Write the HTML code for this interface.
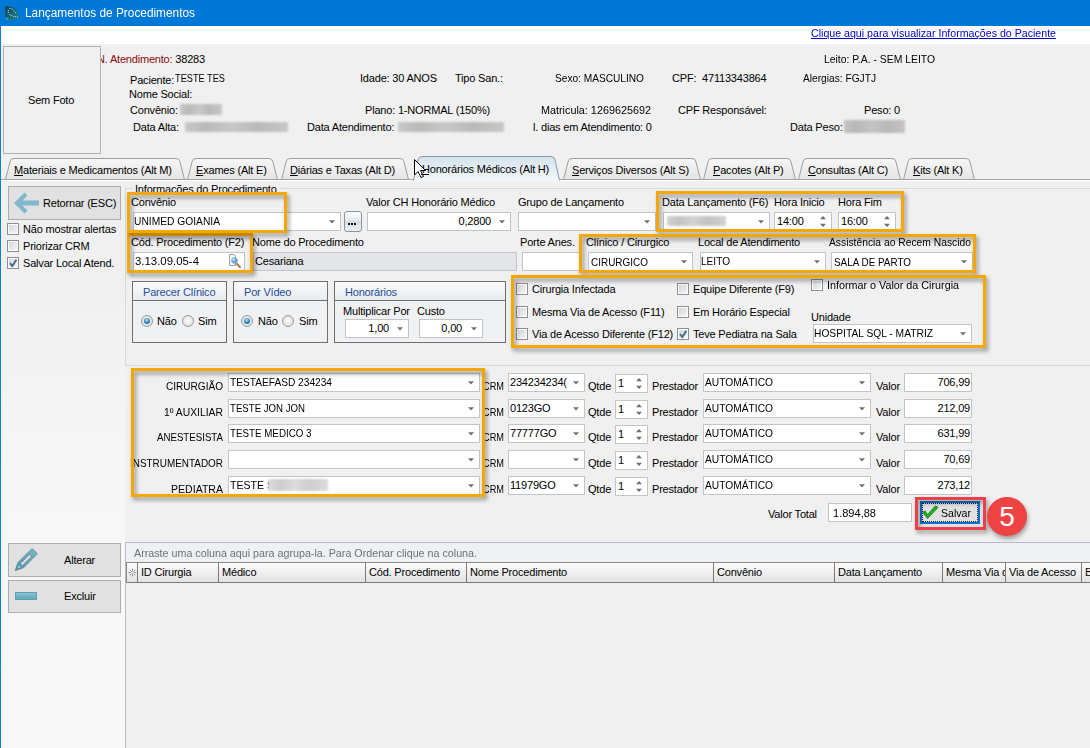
<!DOCTYPE html><html><head><meta charset="utf-8"><style>
*{box-sizing:border-box;margin:0;padding:0}
html,body{width:1090px;height:748px;overflow:hidden;background:#f0f0f0}
body{position:relative;font-family:"Liberation Sans",sans-serif;font-size:11px;letter-spacing:-0.19px;color:#000}
.a{position:absolute}
.t{position:absolute;white-space:nowrap;line-height:13px;height:13px}
.blur{position:absolute;filter:blur(1.3px);border-radius:1px}
.inp{position:absolute;background:#fff;border:1px solid #bfc5cb}
.cb{position:absolute;border:1px solid #8f8f8f;background:linear-gradient(135deg,#cdd3d9,#f7f8f9);box-shadow:inset 0 0 0 1px #fcfcfc}
.dd{position:absolute;width:0;height:0;border-left:3px solid transparent;border-right:3px solid transparent;border-top:3px solid #707070}
.ob{position:absolute;border:3px solid #f7a800;filter:drop-shadow(2px 3px 2px rgba(0,0,0,0.42))}
.grp{position:absolute;border:1px solid #6f6f6f;background:#f0f1f3}
.grph{position:absolute;left:0;right:0;top:0;height:19px;border-bottom:1px solid #6f6f6f;background:linear-gradient(#fafbfc,#e8ebf0)}
.rad{position:absolute;width:12px;height:12px;border-radius:50%;border:1px solid #9a9a9a;background:radial-gradient(circle,#fafafa,#dadada)}
.btn{position:absolute;background:#e1e1e1;border:1px solid #adadad}
.gh{position:absolute;top:562px;height:21px;border:1px solid #7a7a7a;border-left:none;border-top-color:#8a8a8a;background:linear-gradient(#fcfcfc,#e2e2e4)}
</style></head><body>
<div class="a" style="left:0;top:0;width:1090px;height:26px;background:#0078d7"></div>
<div class="a" style="left:0;top:26px;width:1px;height:722px;background:#1a7bd2"></div>
<div class="a" style="left:1px;top:26px;width:1089px;height:18px;background:#fff"></div>
<svg class="a" style="left:0;top:0" width="25" height="25" viewBox="0 0 25 25"><defs><linearGradient id="ig" x1="0" y1="0" x2="1" y2="1"><stop offset="0" stop-color="#0b3f4d"/><stop offset="0.6" stop-color="#17707f"/><stop offset="1" stop-color="#1a8294"/></linearGradient></defs><path d="M5.2 7.5 Q5.5 6 7.5 6.2 L13 7.3 Q16.5 8.8 18.3 13 L19 16.5 Q18.6 19.6 15 19.6 L8 20.2 Q5.4 19.8 5.2 17 Z" fill="url(#ig)"/><path d="M8.3 13 L8.3 10 Q9 8 11 8.3 Q14 9.5 16 14 M9.5 14.5 L13.5 16.5 L18.5 17" stroke="#dff0f3" stroke-width="0.9" fill="none" stroke-dasharray="1 1"/><path d="M6 18 L8.5 20" stroke="#cfe6f5" stroke-width="1" stroke-dasharray="1 0.8"/></svg>
<div class="t" style="left:25px;top:7px;letter-spacing:0;transform:scaleX(0.9482);transform-origin:0 0;color:#fff;font-size:12.5px">Lançamentos de Procedimentos</div>
<div class="t" style="left:811px;top:27px;letter-spacing:0;transform:scaleX(0.9655);transform-origin:0 0;color:#0000d0;text-decoration:underline">Clique aqui para visualizar Informações do Paciente</div>
<div class="t" style="left:97px;top:53px;color:#8b0d0d">N. Atendimento: <span style="color:#000">38283</span></div>
<div class="a" style="left:3px;top:46px;width:98px;height:108px;border:1px solid #aeb2b7;background:#f0f0f0"></div>
<div class="t" style="left:28px;top:94px;">Sem Foto</div>
<div class="t" style="left:824px;top:53px;letter-spacing:0;transform:scaleX(0.9439);transform-origin:0 0;">Leito: P.A. - SEM LEITO</div>
<div class="t" style="left:130px;top:74px;">Paciente:</div>
<div class="t" style="left:175px;top:72px;letter-spacing:0;transform:scaleX(0.8375);transform-origin:0 0;">TESTE TES</div>
<div class="t" style="left:360px;top:72px;">Idade: 30 ANOS</div>
<div class="t" style="left:455px;top:72px;">Tipo San.:</div>
<div class="t" style="left:555px;top:72px;letter-spacing:0;transform:scaleX(0.9214);transform-origin:0 0;">Sexo: MASCULINO</div>
<div class="t" style="left:672px;top:72px;">CPF:&nbsp; 47113343864</div>
<div class="t" style="left:803px;top:72px;letter-spacing:0;transform:scaleX(0.9257);transform-origin:0 0;">Alergias: FGJTJ</div>
<div class="t" style="left:129px;top:88px;">Nome Social:</div>
<div class="t" style="left:130px;top:104px;">Convênio:</div>
<div class="blur" style="left:180px;top:104px;width:42px;height:11px;background:linear-gradient(90deg,#c8c8c8,#b9b9b9 20%,#c8c8c8 45%,#b9b9b9 70%,#c8c8c8)"></div>
<div class="t" style="left:365px;top:104px;">Plano: 1-NORMAL (150%)</div>
<div class="t" style="left:541px;top:104px;letter-spacing:0;transform:scaleX(0.9828);transform-origin:0 0;">Matricula: 1269625692</div>
<div class="t" style="left:678px;top:104px;">CPF Responsável:</div>
<div class="t" style="left:864px;top:104px;">Peso: 0</div>
<div class="t" style="left:133px;top:121px;">Data Alta:</div>
<div class="blur" style="left:185px;top:122px;width:103px;height:10px;background:linear-gradient(90deg,#c8c8c8,#b9b9b9 20%,#c8c8c8 45%,#b9b9b9 70%,#c8c8c8)"></div>
<div class="t" style="left:307px;top:121px;">Data Atendimento:</div>
<div class="blur" style="left:398px;top:122px;width:106px;height:10px;background:linear-gradient(90deg,#c8c8c8,#b9b9b9 20%,#c8c8c8 45%,#b9b9b9 70%,#c8c8c8)"></div>
<div class="t" style="left:533px;top:121px;">l. dias em Atendimento: 0</div>
<div class="t" style="left:790px;top:121px;">Data Peso:</div>
<div class="blur" style="left:844px;top:120px;width:61px;height:13px;background:linear-gradient(90deg,#c4c4c4,#b8b8b8 20%,#c4c4c4 45%,#b8b8b8 70%,#c4c4c4)"></div>
<svg class="a" style="left:0;top:0" width="1090" height="200" viewBox="0 0 1090 200">
<defs><linearGradient id="tg" x1="0" y1="0" x2="0" y2="1"><stop offset="0" stop-color="#f7f7f7"/><stop offset="1" stop-color="#e4e4e4"/></linearGradient><linearGradient id="ta" x1="0" y1="0" x2="0" y2="1"><stop offset="0" stop-color="#d5e3ec"/><stop offset="1" stop-color="#f4f8fa"/></linearGradient></defs>
<path d="M5.5 179.5 L10.0 162 Q10.5 158.5 14 158.5 L176 158.5 Q179.5 158.5 180 162 L184.5 179.5 Z" fill="url(#tg)" stroke="none"/>
<path d="M5.5 179.5 L10.0 162 Q10.5 158.5 14 158.5 L176 158.5 Q179.5 158.5 180 162 L184.5 179.5" fill="none" stroke="#9d9d9d" stroke-width="1"/>
<path d="M187.5 179.5 L192.0 162 Q192.5 158.5 196 158.5 L269 158.5 Q272.5 158.5 273 162 L277.5 179.5 Z" fill="url(#tg)" stroke="none"/>
<path d="M187.5 179.5 L192.0 162 Q192.5 158.5 196 158.5 L269 158.5 Q272.5 158.5 273 162 L277.5 179.5" fill="none" stroke="#9d9d9d" stroke-width="1"/>
<path d="M281.5 179.5 L286.0 162 Q286.5 158.5 290 158.5 L400 158.5 Q403.5 158.5 404 162 L408.5 179.5 Z" fill="url(#tg)" stroke="none"/>
<path d="M281.5 179.5 L286.0 162 Q286.5 158.5 290 158.5 L400 158.5 Q403.5 158.5 404 162 L408.5 179.5" fill="none" stroke="#9d9d9d" stroke-width="1"/>
<path d="M563.5 179.5 L568.0 162 Q568.5 158.5 572 158.5 L692 158.5 Q695.5 158.5 696 162 L700.5 179.5 Z" fill="url(#tg)" stroke="none"/>
<path d="M563.5 179.5 L568.0 162 Q568.5 158.5 572 158.5 L692 158.5 Q695.5 158.5 696 162 L700.5 179.5" fill="none" stroke="#9d9d9d" stroke-width="1"/>
<path d="M703.5 179.5 L708.0 162 Q708.5 158.5 712 158.5 L787 158.5 Q790.5 158.5 791 162 L795.5 179.5 Z" fill="url(#tg)" stroke="none"/>
<path d="M703.5 179.5 L708.0 162 Q708.5 158.5 712 158.5 L787 158.5 Q790.5 158.5 791 162 L795.5 179.5" fill="none" stroke="#9d9d9d" stroke-width="1"/>
<path d="M798.5 179.5 L803.0 162 Q803.5 158.5 807 158.5 L892 158.5 Q895.5 158.5 896 162 L900.5 179.5 Z" fill="url(#tg)" stroke="none"/>
<path d="M798.5 179.5 L803.0 162 Q803.5 158.5 807 158.5 L892 158.5 Q895.5 158.5 896 162 L900.5 179.5" fill="none" stroke="#9d9d9d" stroke-width="1"/>
<path d="M903.5 179.5 L908.0 162 Q908.5 158.5 912 158.5 L966 158.5 Q969.5 158.5 970 162 L974.5 179.5 Z" fill="url(#tg)" stroke="none"/>
<path d="M903.5 179.5 L908.0 162 Q908.5 158.5 912 158.5 L966 158.5 Q969.5 158.5 970 162 L974.5 179.5" fill="none" stroke="#9d9d9d" stroke-width="1"/>
<rect x="1" y="179" width="1089" height="1" fill="#a3a3a3"/>
<rect x="1" y="180" width="1089" height="1" fill="#ffffff"/>
<path d="M413.5 181.5 L418.0 160 Q418.5 156.5 422 156.5 L551 156.5 Q554.5 156.5 555 160 L559.5 181.5 Z" fill="url(#ta)"/>
<path d="M413.5 180.5 L418.0 160 Q418.5 156.5 422 156.5 L551 156.5 Q554.5 156.5 555 160 L559.5 180.5" fill="none" stroke="#8e9aa2" stroke-width="1"/>
</svg>
<div class="t" style="left:14px;top:164px"><u>M</u>ateriais e Medicamentos (Alt M)</div>
<div class="t" style="left:196px;top:164px"><u>E</u>xames (Alt E)</div>
<div class="t" style="left:290px;top:164px"><u>D</u>iárias e Taxas (Alt D)</div>
<div class="t" style="left:572px;top:164px"><u>S</u>erviços Diversos (Alt S)</div>
<div class="t" style="left:713px;top:164px"><u>P</u>acotes (Alt P)</div>
<div class="t" style="left:808px;top:164px"><u>C</u>onsultas (Alt C)</div>
<div class="t" style="left:913px;top:164px"><u>K</u>its (Alt K)</div>
<div class="t" style="left:422px;top:163px">Honorários Médicos (Alt H)</div>
<svg class="a" style="left:413px;top:158px" width="14" height="21" viewBox="0 0 14 21"><path d="M1.5 1.5 L1.5 17 L5 13.5 L8 19.5 L10.5 18.5 L7.5 12.5 L12.5 12.5 Z" fill="#fff" stroke="#000" stroke-width="1" stroke-linejoin="miter"/></svg>
<div class="a" style="left:421px;top:174px;width:8px;height:1px;background:#000"></div>
<div class="a" style="left:1px;top:181px;width:124px;height:567px;background:linear-gradient(#f0f0f0 0%,#f0f0f0 15%,#f7f7f7 55%,#f8f8f8 100%)"></div>
<div class="btn" style="left:8px;top:186px;width:113px;height:34px"></div>
<svg class="a" style="left:13px;top:191px" width="28" height="24" viewBox="0 0 28 24"><path d="M1 12 L11.5 1.5 L14.5 4.5 L9.5 9.5 L26 9.5 L26 14.5 L9.5 14.5 L14.5 19.5 L11.5 22.5 Z" fill="#7fb8cb"/></svg>
<div class="t" style="left:43px;top:197px;">Retornar (ESC)</div>
<div class="cb" style="left:7px;top:223px;width:12px;height:12px"></div>
<div class="t" style="left:23px;top:223px;">Não mostrar alertas</div>
<div class="cb" style="left:7px;top:240px;width:12px;height:12px"></div>
<div class="t" style="left:23px;top:240px;">Priorizar CRM</div>
<div class="cb" style="left:7px;top:257px;width:12px;height:12px"></div>
<svg class="a" style="left:7px;top:257px" width="12" height="12"><path d="M3 6 L5.3 9 L9.3 2.8" fill="none" stroke="#4a6790" stroke-width="1.9"/></svg>
<div class="t" style="left:23px;top:257px;">Salvar Local Atend.</div>
<div class="btn" style="left:8px;top:543px;width:113px;height:34px"></div>
<svg class="a" style="left:10px;top:545px" width="30" height="30" viewBox="0 0 30 30"><defs><linearGradient id="pg" x1="0" y1="1" x2="1" y2="0"><stop offset="0" stop-color="#4f98b2"/><stop offset="1" stop-color="#78b6ca"/></linearGradient></defs><path d="M21.5 4 Q22.2 3.5 23 4.2 L26.8 8 Q27.4 8.8 26.8 9.5 L13.5 22.8 L5 25.8 L7.8 17.5 Z M19.6 9.6 L21.4 11.4 L12.4 20.4 L10.6 18.6 Z" fill="url(#pg)" fill-rule="evenodd" stroke="#55656b" stroke-width="0.5"/><circle cx="9" cy="21.8" r="0.9" fill="#dfe8ea"/></svg>
<div class="t" style="left:64px;top:554px;">Alterar</div>
<div class="btn" style="left:8px;top:580px;width:113px;height:33px"></div>
<div class="a" style="left:15px;top:592px;width:22px;height:8px;background:linear-gradient(#8cc3d3,#62a7bd);border:1px solid #5d9fb4"></div>
<div class="t" style="left:64px;top:590px;">Excluir</div>
<div class="a" style="left:125px;top:188px;width:966px;height:178px;border:1px solid #d8d8d8;border-right:none"></div>
<div class="a" style="left:133px;top:183px;width:147px;height:13px;background:#f0f0f0"></div>
<div class="t" style="left:135px;top:183px;">Informações do Procedimento</div>
<div class="t" style="left:131px;top:196px;">Convênio</div>
<div class="inp" style="left:133px;top:212px;width:208px;height:19px;background:#fff"></div>
<svg class="a" style="left:329px;top:220px" width="6" height="4"><path d="M0 0.2 L6 0.2 L3 3.4 Z" fill="#707070"/></svg>
<div class="t" style="left:134px;top:215px;letter-spacing:0;transform:scaleX(0.9318);transform-origin:0 0;">UNIMED GOIANIA</div>
<div class="a" style="left:344px;top:211px;width:18px;height:21px;border:1px solid #8a949e;border-radius:3px;background:linear-gradient(#fdfdfe 0%,#e9edf1 46%,#d6dde4 50%,#eef1f4 100%)"></div>
<div class="a" style="left:348px;top:223px;width:2px;height:2px;background:#111"></div><div class="a" style="left:351px;top:223px;width:2px;height:2px;background:#111"></div><div class="a" style="left:354px;top:223px;width:2px;height:2px;background:#111"></div>
<div class="t" style="left:366px;top:196px;">Valor CH Honorário Médico</div>
<div class="inp" style="left:367px;top:212px;width:144px;height:19px;background:#fff"></div>
<svg class="a" style="left:499px;top:220px" width="6" height="4"><path d="M0 0.2 L6 0.2 L3 3.4 Z" fill="#707070"/></svg>
<div class="t" style="left:191px;width:300px;text-align:right;top:215px;">0,2800</div>
<div class="t" style="left:518px;top:196px;">Grupo de Lançamento</div>
<div class="inp" style="left:518px;top:212px;width:138px;height:19px;background:#fff"></div>
<svg class="a" style="left:644px;top:220px" width="6" height="4"><path d="M0 0.2 L6 0.2 L3 3.4 Z" fill="#707070"/></svg>
<div class="t" style="left:662px;top:196px;">Data Lançamento (F6)</div>
<div class="inp" style="left:663px;top:212px;width:107px;height:19px;background:#fff"></div>
<svg class="a" style="left:758px;top:220px" width="6" height="4"><path d="M0 0.2 L6 0.2 L3 3.4 Z" fill="#707070"/></svg>
<div class="blur" style="left:667px;top:216px;width:59px;height:10px;background:linear-gradient(90deg,#d2d2d2,#c2c2c2 20%,#d2d2d2 45%,#c2c2c2 70%,#d2d2d2)"></div>
<div class="t" style="left:774px;top:196px;">Hora Inicio</div>
<div class="inp" style="left:774px;top:212px;width:58px;height:18px"></div>
<svg class="a" style="left:820px;top:215px" width="7" height="13"><path d="M0 4.2 L6 4.2 L3 1 Z M0 8.8 L6 8.8 L3 12 Z" fill="#6e6e6e"/></svg>
<div class="t" style="left:777px;top:215px;">14:00</div>
<div class="t" style="left:838px;top:196px;">Hora Fim</div>
<div class="inp" style="left:838px;top:212px;width:58px;height:18px"></div>
<svg class="a" style="left:884px;top:215px" width="7" height="13"><path d="M0 4.2 L6 4.2 L3 1 Z M0 8.8 L6 8.8 L3 12 Z" fill="#6e6e6e"/></svg>
<div class="t" style="left:841px;top:215px;">16:00</div>
<div class="t" style="left:131px;top:236px;">Cód. Procedimento (F2)</div>
<div class="inp" style="left:133px;top:252px;width:112px;height:19px;background:#fff"></div>
<div class="t" style="left:135px;top:255px;letter-spacing:0;transform:scaleX(1.0359);transform-origin:0 0;">3.13.09.05-4</div>
<svg class="a" style="left:228px;top:254px" width="14" height="15" viewBox="0 0 14 15"><path d="M1.5 0.5 L6 0.5 L7.5 2 L7.5 11.5 L1.5 11.5Z" fill="#f4f8fb" stroke="#8d959c" stroke-width="0.9"/><path d="M7.5 8.5 L12 13" stroke="#a88452" stroke-width="2.2" stroke-linecap="round"/><circle cx="6.5" cy="6.5" r="3" fill="#5aa6dc" stroke="#9fb3c2" stroke-width="0.8"/><circle cx="5.6" cy="5.6" r="1.2" fill="#d9eefa"/></svg>
<div class="t" style="left:252px;top:236px;">Nome do Procedimento</div>
<div class="inp" style="left:253px;top:252px;width:264px;height:19px;background:#e4e5e9"></div>
<div class="t" style="left:255px;top:255px;">Cesariana</div>
<div class="t" style="left:520px;top:236px;">Porte Anes.</div>
<div class="inp" style="left:522px;top:252px;width:59px;height:19px;background:#fff"></div>
<div class="t" style="left:586px;top:236px;">Clínico / Cirurgico</div>
<div class="inp" style="left:588px;top:252px;width:105px;height:19px;background:#fff"></div>
<svg class="a" style="left:681px;top:260px" width="6" height="4"><path d="M0 0.2 L6 0.2 L3 3.4 Z" fill="#707070"/></svg>
<div class="t" style="left:591px;top:256px;letter-spacing:0;transform:scaleX(0.9054);transform-origin:0 0;">CIRURGICO</div>
<div class="t" style="left:698px;top:236px;">Local de Atendimento</div>
<div class="inp" style="left:700px;top:252px;width:126px;height:19px;background:#fff"></div>
<svg class="a" style="left:814px;top:260px" width="6" height="4"><path d="M0 0.2 L6 0.2 L3 3.4 Z" fill="#707070"/></svg>
<div class="t" style="left:701px;top:255px;letter-spacing:0;transform:scaleX(0.9179);transform-origin:0 0;">LEITO</div>
<div class="t" style="left:829px;top:236px;letter-spacing:0;transform:scaleX(0.9365);transform-origin:0 0;">Assistência ao Recem Nascido</div>
<div class="inp" style="left:831px;top:252px;width:142px;height:19px;background:#fff"></div>
<svg class="a" style="left:961px;top:260px" width="6" height="4"><path d="M0 0.2 L6 0.2 L3 3.4 Z" fill="#707070"/></svg>
<div class="t" style="left:834px;top:256px;letter-spacing:0;transform:scaleX(0.8996);transform-origin:0 0;">SALA DE PARTO</div>
<div class="grp" style="left:132px;top:281px;width:95px;height:62px"><div class="grph"></div></div>
<div class="t" style="left:143px;top:286px;color:#1f4e9c">Parecer Clínico</div>
<div class="grp" style="left:233px;top:281px;width:95px;height:62px"><div class="grph"></div></div>
<div class="t" style="left:244px;top:286px;color:#1f4e9c">Por Vídeo</div>
<div class="grp" style="left:334px;top:281px;width:172px;height:62px"><div class="grph"></div></div>
<div class="t" style="left:345px;top:286px;color:#1f4e9c">Honorários</div>
<div class="rad" style="left:141px;top:315px"></div>
<div class="a" style="left:144px;top:318px;width:6px;height:6px;border-radius:50%;background:radial-gradient(circle at 45% 35%,#bfe3f5,#1d78b0 60%,#0d4f80)"></div>
<div class="t" style="left:157px;top:315px;">Não</div>
<div class="rad" style="left:182px;top:315px"></div>
<div class="t" style="left:198px;top:315px;">Sim</div>
<div class="rad" style="left:241px;top:315px"></div>
<div class="a" style="left:244px;top:318px;width:6px;height:6px;border-radius:50%;background:radial-gradient(circle at 45% 35%,#bfe3f5,#1d78b0 60%,#0d4f80)"></div>
<div class="t" style="left:258px;top:315px;">Não</div>
<div class="rad" style="left:282px;top:315px"></div>
<div class="t" style="left:299px;top:315px;">Sim</div>
<div class="t" style="left:343px;top:305px;">Multiplicar Por</div>
<div class="t" style="left:417px;top:305px;">Custo</div>
<div class="inp" style="left:345px;top:319px;width:64px;height:19px;background:#fff"></div>
<svg class="a" style="left:397px;top:327px" width="6" height="4"><path d="M0 0.2 L6 0.2 L3 3.4 Z" fill="#707070"/></svg>
<div class="t" style="left:89px;width:300px;text-align:right;top:322px;">1,00</div>
<div class="inp" style="left:419px;top:319px;width:64px;height:19px;background:#fff"></div>
<svg class="a" style="left:471px;top:327px" width="6" height="4"><path d="M0 0.2 L6 0.2 L3 3.4 Z" fill="#707070"/></svg>
<div class="t" style="left:162px;width:300px;text-align:right;top:322px;">0,00</div>
<div class="cb" style="left:516px;top:283px;width:12px;height:12px"></div>
<div class="t" style="left:532px;top:283px;">Cirurgia Infectada</div>
<div class="cb" style="left:516px;top:306px;width:12px;height:12px"></div>
<div class="t" style="left:532px;top:306px;">Mesma Via de Acesso (F11)</div>
<div class="cb" style="left:516px;top:328px;width:12px;height:12px"></div>
<div class="t" style="left:532px;top:328px;">Via de Acesso Diferente (F12)</div>
<div class="cb" style="left:677px;top:283px;width:12px;height:12px"></div>
<div class="t" style="left:693px;top:283px;">Equipe Diferente (F9)</div>
<div class="cb" style="left:677px;top:306px;width:12px;height:12px"></div>
<div class="t" style="left:693px;top:306px;">Em Horário Especial</div>
<div class="cb" style="left:677px;top:328px;width:12px;height:12px"></div>
<svg class="a" style="left:677px;top:328px" width="12" height="12"><path d="M3 6 L5.3 9 L9.3 2.8" fill="none" stroke="#4a6790" stroke-width="1.9"/></svg>
<div class="t" style="left:693px;top:328px;">Teve Pediatra na Sala</div>
<div class="cb" style="left:811px;top:279px;width:12px;height:12px"></div>
<div class="t" style="left:827px;top:279px;letter-spacing:0;transform:scaleX(0.9785);transform-origin:0 0;">Informar o Valor da Cirurgia</div>
<div class="t" style="left:811px;top:311px;">Unidade</div>
<div class="inp" style="left:813px;top:324px;width:159px;height:19px;background:#fff"></div>
<svg class="a" style="left:960px;top:332px" width="6" height="4"><path d="M0 0.2 L6 0.2 L3 3.4 Z" fill="#707070"/></svg>
<div class="t" style="left:814px;top:327px;letter-spacing:0;transform:scaleX(0.9315);transform-origin:0 0;">HOSPITAL SQL - MATRIZ</div>
<div class="t" style="left:-77px;width:300px;text-align:right;top:380px;letter-spacing:0;transform:scaleX(0.9143);transform-origin:100% 0;">CIRURGIÃO</div>
<div class="inp" style="left:228px;top:373px;width:252px;height:19px;background:#fff"></div>
<svg class="a" style="left:468px;top:381px" width="6" height="4"><path d="M0 0.2 L6 0.2 L3 3.4 Z" fill="#707070"/></svg>
<div class="t" style="left:230px;top:376px;letter-spacing:0;transform:scaleX(0.9233);transform-origin:0 0;">TESTAEFASD 234234</div>
<div class="t" style="left:483px;top:380px;letter-spacing:0;transform:scaleX(0.8379);transform-origin:0 0;">CRM</div>
<div class="inp" style="left:508px;top:373px;width:77px;height:19px;background:#fff"></div>
<svg class="a" style="left:573px;top:381px" width="6" height="4"><path d="M0 0.2 L6 0.2 L3 3.4 Z" fill="#707070"/></svg>
<div class="t" style="left:510px;top:376px;">234234234(</div>
<div class="t" style="left:588px;top:380px;">Qtde</div>
<div class="inp" style="left:615px;top:374px;width:33px;height:19px"></div>
<svg class="a" style="left:636px;top:377px" width="7" height="13"><path d="M0 4.2 L6 4.2 L3 1 Z M0 8.8 L6 8.8 L3 12 Z" fill="#6e6e6e"/></svg>
<div class="t" style="left:618px;top:377px;">1</div>
<div class="t" style="left:652px;top:380px;">Prestador</div>
<div class="inp" style="left:703px;top:373px;width:168px;height:19px;background:#fff"></div>
<svg class="a" style="left:859px;top:381px" width="6" height="4"><path d="M0 0.2 L6 0.2 L3 3.4 Z" fill="#707070"/></svg>
<div class="t" style="left:705px;top:376px;letter-spacing:0;transform:scaleX(0.9297);transform-origin:0 0;">AUTOMÁTICO</div>
<div class="t" style="left:876px;top:380px;">Valor</div>
<div class="inp" style="left:904px;top:373px;width:68px;height:19px;background:#fff"></div>
<div class="t" style="left:670px;width:300px;text-align:right;top:376px;">706,99</div>
<div class="t" style="left:-77px;width:300px;text-align:right;top:406px;letter-spacing:0;transform:scaleX(0.9407);transform-origin:100% 0;">1º AUXILIAR</div>
<div class="inp" style="left:228px;top:399px;width:252px;height:19px;background:#fff"></div>
<svg class="a" style="left:468px;top:407px" width="6" height="4"><path d="M0 0.2 L6 0.2 L3 3.4 Z" fill="#707070"/></svg>
<div class="t" style="left:230px;top:402px;letter-spacing:0;transform:scaleX(0.8766);transform-origin:0 0;">TESTE JON JON</div>
<div class="t" style="left:483px;top:406px;letter-spacing:0;transform:scaleX(0.8379);transform-origin:0 0;">CRM</div>
<div class="inp" style="left:508px;top:399px;width:77px;height:19px;background:#fff"></div>
<svg class="a" style="left:573px;top:407px" width="6" height="4"><path d="M0 0.2 L6 0.2 L3 3.4 Z" fill="#707070"/></svg>
<div class="t" style="left:510px;top:402px;">0123GO</div>
<div class="t" style="left:588px;top:406px;">Qtde</div>
<div class="inp" style="left:615px;top:400px;width:33px;height:19px"></div>
<svg class="a" style="left:636px;top:403px" width="7" height="13"><path d="M0 4.2 L6 4.2 L3 1 Z M0 8.8 L6 8.8 L3 12 Z" fill="#6e6e6e"/></svg>
<div class="t" style="left:618px;top:403px;">1</div>
<div class="t" style="left:652px;top:406px;">Prestador</div>
<div class="inp" style="left:703px;top:399px;width:168px;height:19px;background:#fff"></div>
<svg class="a" style="left:859px;top:407px" width="6" height="4"><path d="M0 0.2 L6 0.2 L3 3.4 Z" fill="#707070"/></svg>
<div class="t" style="left:705px;top:402px;letter-spacing:0;transform:scaleX(0.9297);transform-origin:0 0;">AUTOMÁTICO</div>
<div class="t" style="left:876px;top:406px;">Valor</div>
<div class="inp" style="left:904px;top:399px;width:68px;height:19px;background:#fff"></div>
<div class="t" style="left:670px;width:300px;text-align:right;top:402px;">212,09</div>
<div class="t" style="left:-77px;width:300px;text-align:right;top:431px;letter-spacing:0;transform:scaleX(0.8802);transform-origin:100% 0;">ANESTESISTA</div>
<div class="inp" style="left:228px;top:424px;width:252px;height:19px;background:#fff"></div>
<svg class="a" style="left:468px;top:432px" width="6" height="4"><path d="M0 0.2 L6 0.2 L3 3.4 Z" fill="#707070"/></svg>
<div class="t" style="left:230px;top:427px;letter-spacing:0;transform:scaleX(0.8889);transform-origin:0 0;">TESTE MEDICO 3</div>
<div class="t" style="left:483px;top:431px;letter-spacing:0;transform:scaleX(0.8379);transform-origin:0 0;">CRM</div>
<div class="inp" style="left:508px;top:424px;width:77px;height:19px;background:#fff"></div>
<svg class="a" style="left:573px;top:432px" width="6" height="4"><path d="M0 0.2 L6 0.2 L3 3.4 Z" fill="#707070"/></svg>
<div class="t" style="left:510px;top:427px;">77777GO</div>
<div class="t" style="left:588px;top:431px;">Qtde</div>
<div class="inp" style="left:615px;top:425px;width:33px;height:19px"></div>
<svg class="a" style="left:636px;top:428px" width="7" height="13"><path d="M0 4.2 L6 4.2 L3 1 Z M0 8.8 L6 8.8 L3 12 Z" fill="#6e6e6e"/></svg>
<div class="t" style="left:618px;top:428px;">1</div>
<div class="t" style="left:652px;top:431px;">Prestador</div>
<div class="inp" style="left:703px;top:424px;width:168px;height:19px;background:#fff"></div>
<svg class="a" style="left:859px;top:432px" width="6" height="4"><path d="M0 0.2 L6 0.2 L3 3.4 Z" fill="#707070"/></svg>
<div class="t" style="left:705px;top:427px;letter-spacing:0;transform:scaleX(0.9297);transform-origin:0 0;">AUTOMÁTICO</div>
<div class="t" style="left:876px;top:431px;">Valor</div>
<div class="inp" style="left:904px;top:424px;width:68px;height:19px;background:#fff"></div>
<div class="t" style="left:670px;width:300px;text-align:right;top:427px;">631,99</div>
<div class="t" style="left:-77px;width:300px;text-align:right;top:457px;letter-spacing:0;transform:scaleX(0.9022);transform-origin:100% 0;">INSTRUMENTADOR</div>
<div class="inp" style="left:228px;top:450px;width:252px;height:19px;background:#fff"></div>
<svg class="a" style="left:468px;top:458px" width="6" height="4"><path d="M0 0.2 L6 0.2 L3 3.4 Z" fill="#707070"/></svg>
<div class="t" style="left:483px;top:457px;letter-spacing:0;transform:scaleX(0.8379);transform-origin:0 0;">CRM</div>
<div class="inp" style="left:508px;top:450px;width:77px;height:19px;background:#fff"></div>
<svg class="a" style="left:573px;top:458px" width="6" height="4"><path d="M0 0.2 L6 0.2 L3 3.4 Z" fill="#707070"/></svg>
<div class="t" style="left:588px;top:457px;">Qtde</div>
<div class="inp" style="left:615px;top:451px;width:33px;height:19px"></div>
<svg class="a" style="left:636px;top:454px" width="7" height="13"><path d="M0 4.2 L6 4.2 L3 1 Z M0 8.8 L6 8.8 L3 12 Z" fill="#6e6e6e"/></svg>
<div class="t" style="left:618px;top:454px;">1</div>
<div class="t" style="left:652px;top:457px;">Prestador</div>
<div class="inp" style="left:703px;top:450px;width:168px;height:19px;background:#fff"></div>
<svg class="a" style="left:859px;top:458px" width="6" height="4"><path d="M0 0.2 L6 0.2 L3 3.4 Z" fill="#707070"/></svg>
<div class="t" style="left:705px;top:453px;letter-spacing:0;transform:scaleX(0.9297);transform-origin:0 0;">AUTOMÁTICO</div>
<div class="t" style="left:876px;top:457px;">Valor</div>
<div class="inp" style="left:904px;top:450px;width:68px;height:19px;background:#fff"></div>
<div class="t" style="left:670px;width:300px;text-align:right;top:453px;">70,69</div>
<div class="t" style="left:-77px;width:300px;text-align:right;top:483px;letter-spacing:0;transform:scaleX(0.9594);transform-origin:100% 0;">PEDIATRA</div>
<div class="inp" style="left:228px;top:476px;width:252px;height:19px;background:#fff"></div>
<svg class="a" style="left:468px;top:484px" width="6" height="4"><path d="M0 0.2 L6 0.2 L3 3.4 Z" fill="#707070"/></svg>
<div class="t" style="left:230px;top:479px;letter-spacing:0;transform:scaleX(0.9598);transform-origin:0 0;">TESTE S</div>
<div class="t" style="left:483px;top:483px;letter-spacing:0;transform:scaleX(0.8379);transform-origin:0 0;">CRM</div>
<div class="inp" style="left:508px;top:476px;width:77px;height:19px;background:#fff"></div>
<svg class="a" style="left:573px;top:484px" width="6" height="4"><path d="M0 0.2 L6 0.2 L3 3.4 Z" fill="#707070"/></svg>
<div class="t" style="left:510px;top:479px;">11979GO</div>
<div class="t" style="left:588px;top:483px;">Qtde</div>
<div class="inp" style="left:615px;top:477px;width:33px;height:19px"></div>
<svg class="a" style="left:636px;top:480px" width="7" height="13"><path d="M0 4.2 L6 4.2 L3 1 Z M0 8.8 L6 8.8 L3 12 Z" fill="#6e6e6e"/></svg>
<div class="t" style="left:618px;top:480px;">1</div>
<div class="t" style="left:652px;top:483px;">Prestador</div>
<div class="inp" style="left:703px;top:476px;width:168px;height:19px;background:#fff"></div>
<svg class="a" style="left:859px;top:484px" width="6" height="4"><path d="M0 0.2 L6 0.2 L3 3.4 Z" fill="#707070"/></svg>
<div class="t" style="left:705px;top:479px;letter-spacing:0;transform:scaleX(0.9297);transform-origin:0 0;">AUTOMÁTICO</div>
<div class="t" style="left:876px;top:483px;">Valor</div>
<div class="inp" style="left:904px;top:476px;width:68px;height:19px;background:#fff"></div>
<div class="t" style="left:670px;width:300px;text-align:right;top:479px;">273,12</div>
<div class="blur" style="left:268px;top:479px;width:60px;height:12px;background:linear-gradient(90deg,#dcdcdc,#cdcdcd 20%,#dcdcdc 45%,#cdcdcd 70%,#dcdcdc)"></div>
<div class="t" style="left:768px;top:508px;">Valor Total</div>
<div class="inp" style="left:828px;top:503px;width:84px;height:19px;background:#fff"></div>
<div class="t" style="left:833px;top:507px;letter-spacing:0;transform:scaleX(1.0040);transform-origin:0 0;">1.894,88</div>
<div class="a" style="left:918px;top:500px;width:64px;height:27px;background:#e1e1e1"></div>
<div class="a" style="left:920px;top:501px;width:60px;height:23px;border:2px solid #0a70d6;background:#e1e1e1"></div>
<div class="a" style="left:922px;top:503px;width:56px;height:19px;border:1px dotted #1a1a1a"></div>
<svg class="a" style="left:922px;top:505px" width="17" height="15" viewBox="0 0 17 15"><path d="M0.8 7.5 L5.5 13.5 L16 2.5 L13.5 0.8 L5.5 9.5 L3 5.8Z" fill="#22b022" stroke="#137a13" stroke-width="0.8"/></svg>
<div class="t" style="left:941px;top:507px;letter-spacing:0;transform:scaleX(0.9619);transform-origin:0 0;">Salvar</div>
<div class="a" style="left:915px;top:497px;width:71px;height:33px;border:3px solid #ee3f47;filter:drop-shadow(2px 3px 2px rgba(0,0,0,0.4))"></div>
<div class="a" style="left:987px;top:497px;width:40px;height:39px;border-radius:50%;background:#ee4343;box-shadow:1px 3px 4px rgba(0,0,0,0.35)"></div>
<div class="t" style="left:987px;width:40px;text-align:center;top:500px;height:34px;line-height:34px;font-size:28px;color:#fff;letter-spacing:0">5</div>
<div class="ob" style="left:127px;top:233px;width:126px;height:40px"></div>
<div class="ob" style="left:127px;top:192px;width:160px;height:41px"></div>
<div class="ob" style="left:656px;top:191px;width:248px;height:41px"></div>
<div class="ob" style="left:579px;top:234px;width:397px;height:39px"></div>
<div class="ob" style="left:511px;top:275px;width:475px;height:73px"></div>
<div class="ob" style="left:131px;top:368px;width:354px;height:129px"></div>
<div class="a" style="left:125px;top:542px;width:965px;height:206px;border-left:1px solid #b3bcc4;border-top:1px solid #b3bcc4;background:#f0f0f0"></div>
<div class="a" style="left:126px;top:543px;width:964px;height:19px;background:#eff0f3"></div>
<div class="t" style="left:134px;top:547px;letter-spacing:0;transform:scaleX(0.9738);transform-origin:0 0;color:#6b7079">Arraste uma coluna aqui para agrupa-la. Para Ordenar clique na coluna.</div>
<div class="gh" style="left:127px;width:11px;overflow:hidden"><svg class="a" style="left:1px;top:5px" width="9" height="9" viewBox="0 0 9 9"><path d="M4.5 0.5 V8.5 M0.5 4.5 H8.5 M1.7 1.7 L7.3 7.3 M7.3 1.7 L1.7 7.3" stroke="#7d8a99" stroke-width="0.9"/><circle cx="4.5" cy="4.5" r="1.3" fill="#f3f3f3"/></svg></div>
<div class="gh" style="left:138px;width:81px;overflow:hidden"><div class="t" style="left:3px;top:3px">ID Cirurgia</div></div>
<div class="gh" style="left:219px;width:147px;overflow:hidden"><div class="t" style="left:3px;top:3px">Médico</div></div>
<div class="gh" style="left:366px;width:101px;overflow:hidden"><div class="t" style="left:3px;top:3px">Cód. Procedimento</div></div>
<div class="gh" style="left:467px;width:247px;overflow:hidden"><div class="t" style="left:3px;top:3px">Nome Procedimento</div></div>
<div class="gh" style="left:714px;width:121px;overflow:hidden"><div class="t" style="left:3px;top:3px">Convênio</div></div>
<div class="gh" style="left:835px;width:108px;overflow:hidden"><div class="t" style="left:3px;top:3px">Data Lançamento</div></div>
<div class="gh" style="left:943px;width:63px;overflow:hidden"><div class="t" style="left:3px;top:3px">Mesma Via de Acesso</div></div>
<div class="gh" style="left:1006px;width:76px;overflow:hidden"><div class="t" style="left:3px;top:3px">Via de Acesso</div></div>
<div class="gh" style="left:1082px;width:9px;overflow:hidden"><div class="t" style="left:3px;top:3px">B</div></div>
<div class="a" style="left:126px;top:562px;width:1px;height:21px;background:#8a8a8a"></div>
</body></html>
